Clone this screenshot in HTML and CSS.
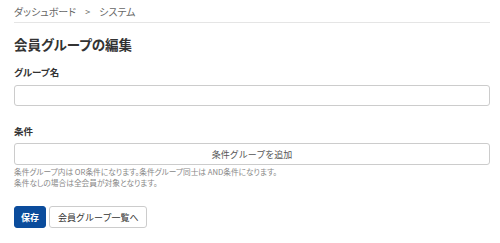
FILE: index.html
```html
<!DOCTYPE html>
<html lang="ja">
<head>
    <meta charset="UTF-8">
    <meta name="viewport" content="width=device-width, initial-scale=1.0">
    <title>会員グループの編集</title>
    <link rel="stylesheet" href="styles.css">
</head>
<body>

<div class="page">
    <nav class="breadcrumb">
        <span>ダッシュボード</span>
        <span class="sep">&gt;</span>
        <span>システム</span>
    </nav>

    <h1>会員グループの編集</h1>

    <form id="groupForm">
        <div class="form-group">
            <label for="groupName">グループ名</label>
            <input type="text" id="groupName">
        </div>

        <div class="form-group">
            <label>条件</label>
            <button type="button" class="btn-add">条件グループを追加</button>
            <p class="help">条件グループ内は OR条件になります。条件グループ同士は AND条件になります。<br>条件なしの場合は全会員が対象となります。</p>
        </div>

        <div class="actions">
            <button type="submit" class="btn-primary">保存</button>
            <button type="button" class="btn-default">会員グループ一覧へ</button>
        </div>
    </form>
</div>

</body>
</html>
```

FILE: styles.css
```css
body {
    font-family: "Noto Sans CJK JP", "Noto Sans", sans-serif;
    font-feature-settings: "palt";
    background-color: #fff;
    color: #333;
    margin: 0;
    padding: 0;
}

.page {
    padding: 0 10px 0 14px;
}

.breadcrumb {
    display: flex;
    gap: 9px;
    align-items: center;
    height: 22px;
    font-size: 10px;
    color: #666;
    border-bottom: 1px solid #e5e5e5;
}

.breadcrumb .sep {
    font-size: 9px;
}

h1 {
    font-size: 13.5px;
    font-weight: bold;
    margin: 12px 0 12px;
    line-height: 18px;
}

.form-group {
    margin-bottom: 18px;
}

.form-group label {
    display: block;
    font-size: 9.5px;
    font-weight: bold;
    margin-bottom: 6px;
    line-height: 14px;
}

.form-group input {
    display: block;
    box-sizing: border-box;
    width: 100%;
    height: 21px;
    border: 1px solid #ccc;
    border-radius: 3px;
    font-size: 10px;
}

.btn-add {
    display: block;
    width: 100%;
    height: 22px;
    margin-top: -1px;
    background: #fff;
    border: 1px solid #ccc;
    border-radius: 3px;
    font-family: inherit;
    font-size: 9px;
    color: #555;
}

.help {
    font-size: 7.7px;
    color: #888;
    line-height: 11px;
    margin: 1px 0 0;
}

.actions {
    display: flex;
    gap: 3px;
    margin-top: 1px;
}

.actions button {
    height: 22px;
    border-radius: 3px;
    font-family: inherit;
    font-size: 9px;
    padding: 0 6px;
}

.btn-primary {
    background-color: #0b4c9c;
    border: 1px solid #0b4c9c;
    color: white;
    font-weight: bold;
}

.actions .btn-default {
    padding: 0 8px;
    background-color: #fff;
    border: 1px solid #ccc;
    color: #333;
}
```
